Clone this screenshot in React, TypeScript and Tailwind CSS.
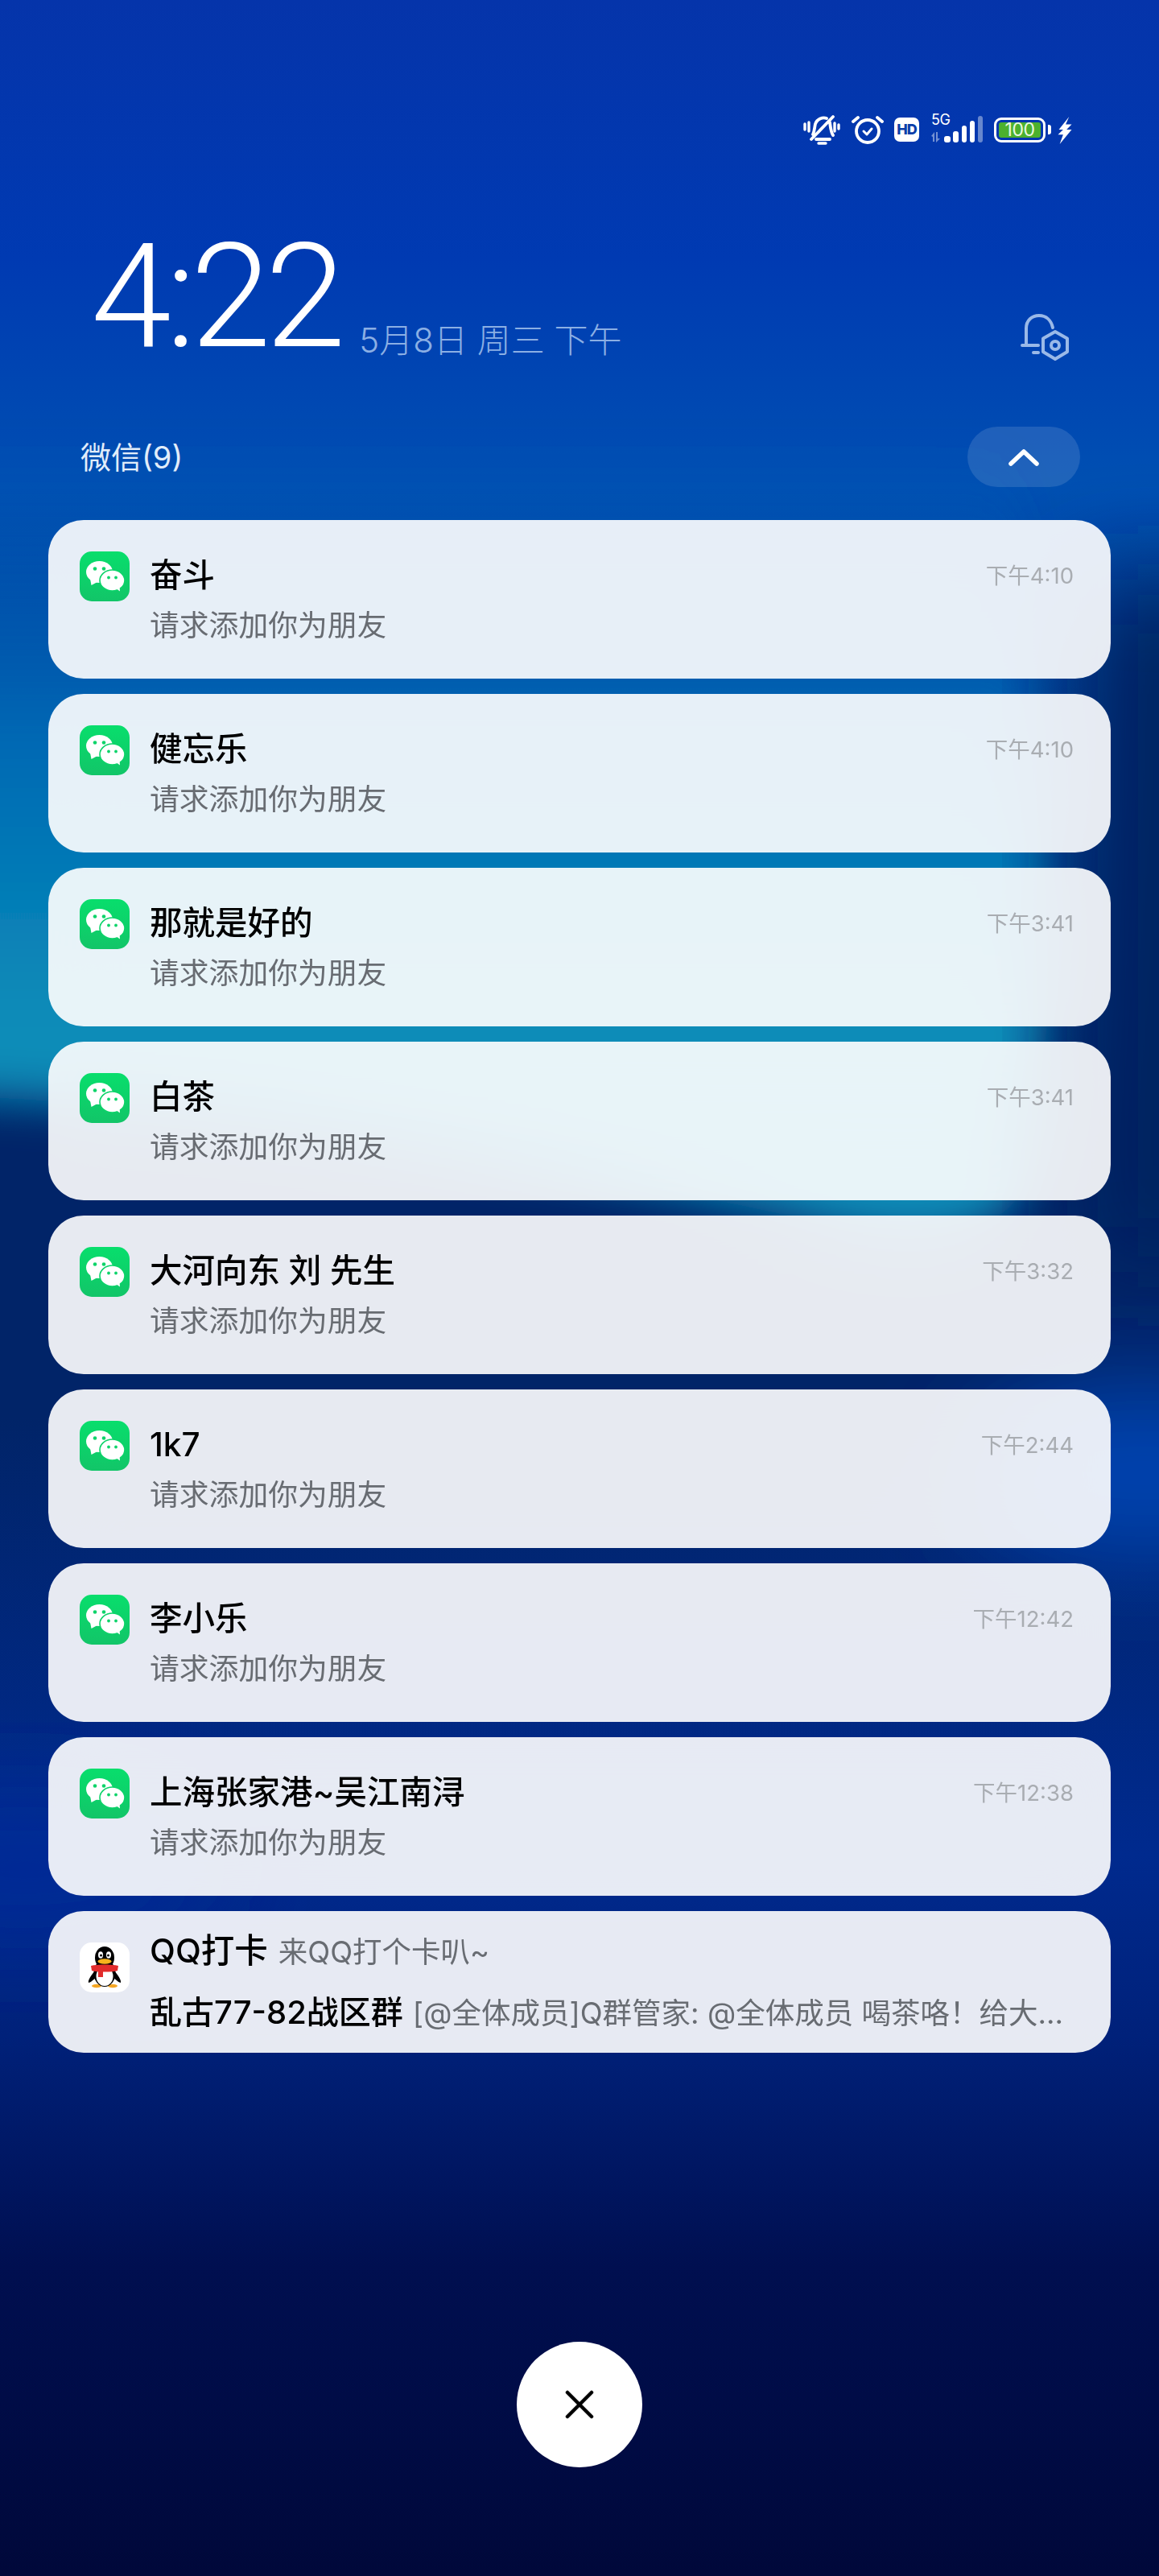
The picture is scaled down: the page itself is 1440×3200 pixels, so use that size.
import React from "react";

const items = [
  ["奋斗", "下午4:10"],
  ["健忘乐", "下午4:10"],
  ["那就是好的", "下午3:41"],
  ["白茶", "下午3:41"],
  ["大河向东 刘 先生", "下午3:32"],
  ["1k7", "下午2:44"],
  ["李小乐", "下午12:42"],
  ["上海张家港~吴江南浔", "下午12:38"],
];

function Wallpaper() {
  return (
    <svg className="absolute inset-0 w-[1440px] h-[3200px]" viewBox="0 0 1440 3200">
      <defs>
        <linearGradient id="base" x1="0" y1="0" x2="0" y2="1">
          <stop offset="0" stopColor="#0534aa" />
          <stop offset="0.1" stopColor="#003ab2" />
          <stop offset="0.19" stopColor="#0050b2" />
          <stop offset="0.44" stopColor="#012468" />
          <stop offset="0.55" stopColor="#012468" />
          <stop offset="0.72" stopColor="#002a8e" />
          <stop offset="0.79" stopColor="#00217a" />
          <stop offset="0.88" stopColor="#000f50" />
          <stop offset="1" stopColor="#00083a" />
        </linearGradient>
        <linearGradient id="teal" x1="0" y1="560" x2="0" y2="1260" gradientUnits="userSpaceOnUse">
          <stop offset="0" stopColor="#0050b2" stopOpacity="0" />
          <stop offset="0.5" stopColor="#0068b4" />
          <stop offset="1" stopColor="#0a8cb8" />
        </linearGradient>
        <filter id="b30" x="-20%" y="-20%" width="140%" height="140%"><feGaussianBlur stdDeviation="28" /></filter>
        <filter id="b70" x="-50%" y="-50%" width="200%" height="200%"><feGaussianBlur stdDeviation="60" /></filter>
      </defs>
      <rect width="1440" height="3200" fill="url(#base)" />
      <path d="M-100 560 H1240 C1290 800 1340 1200 1270 1480 C1220 1560 1080 1540 980 1510 C700 1450 300 1370 -100 1360 Z" fill="url(#teal)" filter="url(#b30)" />
      <rect x="1345" y="720" width="200" height="860" fill="#012060" filter="url(#b70)" />
      <ellipse cx="1420" cy="1830" rx="220" ry="110" fill="#0042ae" filter="url(#b70)" />
      <ellipse cx="30" cy="2320" rx="240" ry="90" fill="#002a96" filter="url(#b70)" />
    </svg>
  );
}

function WeChatIcon() {
  return (
    <svg viewBox="0 0 62 62" className="w-[62px] h-[62px] shrink-0">
      <defs>
        <linearGradient id="wx" x1="0" y1="0" x2="0" y2="1">
          <stop offset="0" stopColor="#08de6c" />
          <stop offset="1" stopColor="#12c568" />
        </linearGradient>
      </defs>
      <rect width="62" height="62" rx="15" fill="url(#wx)" />
      <ellipse cx="24.5" cy="25.5" rx="16.5" ry="13.5" fill="#fff" />
      <path d="M13 34 L14.5 42 L22 38 Z" fill="#fff" />
      <ellipse cx="40.5" cy="36" rx="15.5" ry="13" fill="#fff" stroke="#0cd369" strokeWidth="1.6" />
      <path d="M45 46 L50 49.5 L49.5 43 Z" fill="#fff" />
      <circle cx="19" cy="21.5" r="2.3" fill="#0ed46a" />
      <circle cx="30" cy="21.5" r="2.3" fill="#0ed46a" />
      <circle cx="36" cy="32.5" r="1.9" fill="#0ed46a" />
      <circle cx="45" cy="32.5" r="1.9" fill="#0ed46a" />
    </svg>
  );
}

function QQIcon() {
  return (
    <svg viewBox="0 0 62 62" className="w-[62px] h-[62px] shrink-0">
      <rect width="62" height="62" rx="15" fill="#fff" />
      <path d="M20 34 C14 41 10 47 11 50 C13 50 16 47 20 44 Z" fill="#000" />
      <path d="M42 34 C48 41 52 47 51 50 C49 50 46 47 42 44 Z" fill="#000" />
      <ellipse cx="21" cy="54" rx="6" ry="2.2" fill="#f5a623" />
      <ellipse cx="41" cy="54" rx="6" ry="2.2" fill="#f5a623" />
      <ellipse cx="31" cy="38" rx="13.5" ry="17" fill="#000" />
      <ellipse cx="31" cy="19" rx="12" ry="14" fill="#000" />
      <ellipse cx="31" cy="42" rx="10.5" ry="12" fill="#fff" />
      <ellipse cx="26" cy="15.5" rx="3" ry="4.2" fill="#fff" />
      <ellipse cx="36" cy="15.5" rx="3" ry="4.2" fill="#fff" />
      <circle cx="26.5" cy="16" r="1.5" fill="#000" />
      <circle cx="35.5" cy="16" r="1.5" fill="#000" />
      <ellipse cx="31" cy="23.5" rx="8.5" ry="3.2" fill="#f7b21c" />
      <path d="M14 29 C22 27 40 27 48 29 L47 35 C40 37 22 37 15 35 Z" fill="#e22b2b" />
      <rect x="23" y="33" width="6" height="10" fill="#e22b2b" />
    </svg>
  );
}

function StatusIcons() {
  return (
    <div className="flex items-start h-[42px] ml-[998px] text-white">
      <svg viewBox="0 0 46 38" className="w-[46px] h-[38px]" fill="none" stroke="#fff" strokeLinecap="round" strokeLinejoin="round">
        <path strokeWidth="3.8" d="M12 25 C14 21 14 16 15 12 C17 6 24 3 29 5 M33 10 C34 16 34 21 37 26 M16 31 H33 M10 31 L37 3" />
        <path strokeWidth="3.4" d="M2 12 V19 M7 10 V21 M39 11 V21 M44 13 V18 M19 36 H28" />
      </svg>
      <svg viewBox="0 0 40 38" className="w-[40px] h-[38px] ml-[14px]" fill="none" stroke="#fff" strokeLinecap="round" strokeLinejoin="round">
        <circle cx="20" cy="21" r="14" strokeWidth="3.8" />
        <path strokeWidth="3.8" d="M2 9 L8 4 M38 9 L32 4" />
        <path strokeWidth="3" d="M15 21 L19 25 L25 18" />
      </svg>
      <div className="w-[31px] h-[30px] ml-[13px] mt-[4px] rounded-[7px] bg-white flex items-center justify-center text-[#0b3ea8] text-[18px] leading-none font-extrabold tracking-[-1px] font-['Inter',sans-serif]">HD</div>
      <div className="relative w-[67px] h-[36px] ml-[12px]">
        <span className="absolute left-[3px] -top-[2px] text-[18px] leading-[18px] tracking-[-0.5px] font-['Inter',sans-serif]">5G</span>
        <svg viewBox="0 0 67 36" className="absolute inset-0 w-[67px] h-[36px]">
          <path d="M3 27 L7 22 V34 H5 V28 Z M9 22 H11 V30 L14 30 L9 35 Z" fill="#fff" fillOpacity="0.45" />
          <rect x="19" y="27" width="8" height="8" rx="3" fill="#fff" />
          <rect x="30" y="21" width="7" height="14" rx="3" fill="#fff" />
          <rect x="41" y="14" width="6" height="21" rx="3" fill="#fff" />
          <rect x="51" y="8" width="6" height="27" rx="3" fill="#fff" />
          <rect x="61" y="2" width="6" height="33" rx="3" fill="#fff" fillOpacity="0.4" />
        </svg>
      </div>
      <div className="w-[64px] h-[31px] ml-[14px] mt-[4px] rounded-[9px] border-[3px] border-white p-[3px]">
        <div className="w-full h-full rounded-[3px] bg-[#4cb12e] flex items-center justify-center text-[23px] leading-none tracking-[-0.5px] text-[#eaf8e2] font-['Inter',sans-serif]">100</div>
      </div>
      <div className="w-[4px] h-[12px] ml-[3px] mt-[13px] rounded-r-[3px] bg-white" />
      <svg viewBox="0 0 18 32" className="w-[20px] h-[34px] ml-[7px] mt-[3px]" fill="#fff">
        <path d="M14 0 L2 15 L7 15 L1 21 L7 21 L3 32 L17 15 L11 15 L17 9 L10 9 Z" />
      </svg>
    </div>
  );
}

function BellGear() {
  return (
    <svg viewBox="0 0 60 58" className="w-[60px] h-[58px]" fill="none" stroke="#9ab9e8" strokeWidth="4" strokeLinecap="round" strokeLinejoin="round">
      <path d="M7 39 V18 C7 8 14 2 23 2 C32 2 38 8 40 17" />
      <path d="M2 39 H22 M16 48 H22" />
      <path d="M43 22 L58 30.5 V47 L43 56 L28 47 V30.5 Z" />
      <circle cx="43" cy="39" r="5" />
    </svg>
  );
}

export default function App() {
  return (
    <div className="relative w-[1440px] h-[3200px] overflow-hidden bg-[#002a8e] font-['Inter','Noto_Sans_CJK_SC',sans-serif]">
      <Wallpaper />
      <div className="relative flex flex-col pt-[142px]">
        <StatusIcons />
        <div className="flex items-end mt-[110px] h-[150px] pl-[113px] pr-[112px]">
          <div className="text-white text-[180px] leading-[150px] h-[150px] font-light tracking-[-7px] font-['Roboto',sans-serif]">4:22</div>
          <div className="ml-[24px] mb-[-4px] text-[42px] leading-[50px] font-light text-[#8bafe4] whitespace-nowrap">5月8日 周三 下午</div>
          <div className="ml-auto mb-[-4px]"><BellGear /></div>
        </div>
        <div className="flex items-center justify-between mt-[86px] h-[75px] pl-[100px] pr-[98px]">
          <div className="text-[38px] leading-[48px] text-[#e2edfa]">微信(9)</div>
          <div className="w-[140px] h-[75px] rounded-full bg-white/12 flex items-center justify-center">
            <svg viewBox="0 0 40 24" className="w-[40px] h-[24px]" fill="none" stroke="#fff" strokeWidth="5.5" strokeLinecap="round" strokeLinejoin="round">
              <path d="M4 20 L20 5 L36 20" />
            </svg>
          </div>
        </div>
        <div className="flex flex-col gap-[19px] mt-[41px] mx-[60px]">
          {items.map(([name, time]) => (
            <div key={name} className="flex h-[197px] rounded-[44px] bg-white/[0.905] backdrop-blur-2xl pl-[39px] pt-[39px] pr-[46px]">
              <WeChatIcon />
              <div className="flex-1 ml-[25px] mt-[6px]">
                <div className="flex items-center justify-between h-[48px]">
                  <div className="text-[40.5px] leading-[48px] font-medium text-black whitespace-pre">{name}</div>
                  <div className="text-[27.5px] leading-[48px] text-[#a9adb2]">{time}</div>
                </div>
                <div className="mt-[14px] text-[36.8px] leading-[48px] text-[#686c72]">请求添加你为朋友</div>
              </div>
            </div>
          ))}
          <div className="flex h-[176px] rounded-[44px] bg-white/[0.905] backdrop-blur-2xl pl-[39px] pt-[39px]">
            <QQIcon />
            <div className="ml-[25px] mt-[-14px]">
              <div className="flex items-baseline h-[48px] whitespace-nowrap">
                <span className="text-[41.5px] leading-[48px] font-medium text-black">QQ打卡</span>
                <span className="ml-[13px] text-[36.5px] leading-[48px] text-[#686c72]">来QQ打个卡叭~</span>
              </div>
              <div className="flex items-baseline h-[48px] mt-[29px] whitespace-nowrap">
                <span className="text-[40px] leading-[48px] font-medium text-black">乱古77-82战区群</span>
                <span className="ml-[12px] text-[36.5px] leading-[48px] text-[#686c72]">[@全体成员]Q群管家: @全体成员 喝茶咯！给大...</span>
              </div>
            </div>
          </div>
        </div>
        <div className="mt-[359px] self-center w-[156px] h-[156px] rounded-full bg-white flex items-center justify-center">
          <svg viewBox="0 0 36 36" className="w-[36px] h-[36px]" fill="none" stroke="#000" strokeWidth="4.5" strokeLinecap="round">
            <path d="M3 3 L33 33 M33 3 L3 33" />
          </svg>
        </div>
      </div>
    </div>
  );
}
